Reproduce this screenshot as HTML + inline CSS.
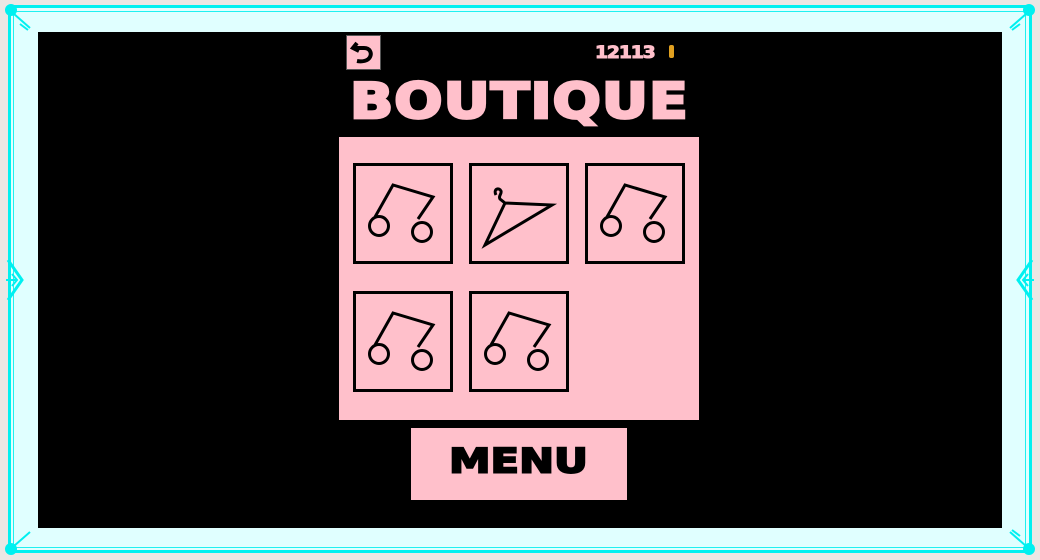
<!DOCTYPE html>
<html><head><style>
body{margin:0;width:1040px;height:560px;background:#ebe7e4;position:relative;overflow:hidden;font-family:"Liberation Sans",sans-serif}
.a{position:absolute}
.pk{background:#ffc0cb}
.cell{position:absolute;width:94px;height:95px;border:3px solid #000;background:#ffc0cb}
.t{position:absolute;font-weight:bold;color:#ffc0cb;white-space:nowrap;transform-origin:0 0;font-family:'DejaVu Sans',sans-serif}
</style></head><body>
<div class="a" style="left:8px;top:5px;width:1024px;height:548px;background:#e0ffff;border:3px solid #00f0f0;box-sizing:border-box"></div>
<div class="a" style="left:13px;top:11px;width:1013px;height:537px;border:1px solid #20f0f0;box-sizing:border-box"></div>
<div class="a" style="left:38px;top:32px;width:964px;height:496px;background:#000"></div>
<svg class="a" style="left:0;top:0" width="1040" height="560">
<g fill="#00f0f0" stroke="#00f0f0" stroke-width="2">
<circle cx="11" cy="10" r="5"/><circle cx="1029" cy="10" r="5"/><circle cx="11" cy="549" r="5"/><circle cx="1029" cy="549" r="5"/>
<path d="M14 14 L30 28 M20 24 L28 30 M1026 14 L1010 28 M1020 24 L1012 30 M14 546 L30 532 M1026 546 L1010 532 M1020 536 L1012 530" fill="none"/>
<path d="M8 260 L22 280 L8 300 M1032 260 L1018 280 L1032 300" fill="none" stroke-width="3"/>
<path d="M6 280 H16 M12 274 L17 280 L12 286 M1034 280 H1024 M1028 274 L1023 280 L1028 286" fill="none"/>
</g></svg>
<div class="a pk" style="left:346px;top:35px;width:35px;height:35px;box-sizing:border-box;border:1px solid #555"></div>
<svg class="a" style="left:346px;top:35px" width="35" height="35"><path d="M11 8 L7 13 L13 16 M7 13 H18 C24 13 26 18 24 22 C22 26 16 27 11 26" fill="none" stroke="#000" stroke-width="4"/></svg>
<div class="t" style="left:595px;top:43px;font-size:17px;letter-spacing:-1px;-webkit-text-stroke:1px #ffc0cb;transform:scale(1.1,1)">12113</div>
<div class="a" style="left:669px;top:45px;width:5px;height:13px;background:#e0a020;border-radius:2px"></div>
<div class="t" style="left:350px;top:74px;font-size:53px;transform:scale(1.07,0.92);-webkit-text-stroke:3px #ffc0cb;letter-spacing:1px">BOUTIQUE</div>
<div class="a pk" style="left:339px;top:137px;width:360px;height:283px"></div>
<div class="cell" style="left:353px;top:163px"></div>
<div class="cell" style="left:469px;top:163px"></div>
<div class="cell" style="left:585px;top:163px"></div>
<div class="cell" style="left:353px;top:291px"></div>
<div class="cell" style="left:469px;top:291px"></div>
<svg class="a" style="left:0;top:0" width="1040" height="560">
<defs><g id="n" fill="none" stroke="#000" stroke-width="3"><path d="M22 54 L40 22 L80 34 L65 56"/><circle cx="26" cy="63" r="9.5"/><circle cx="69" cy="69" r="9.5"/></g></defs>
<use href="#n" x="353" y="163"/><use href="#n" x="585" y="163"/><use href="#n" x="353" y="291"/><use href="#n" x="469" y="291"/>
<g transform="translate(469,163)" fill="none" stroke="#000" stroke-width="3"><path d="M27 32 C24 26 30 24 32 28 C33 31 29 33 31 36 L36 40 L83 42 L16 82 L36 40"/></g>
</svg>
<div class="a pk" style="left:411px;top:428px;width:216px;height:72px"></div>
<div class="t" style="left:449px;top:442px;font-size:36px;color:#000;transform:scale(1.16,0.95);-webkit-text-stroke:2px #000">MENU</div>
</body></html>
